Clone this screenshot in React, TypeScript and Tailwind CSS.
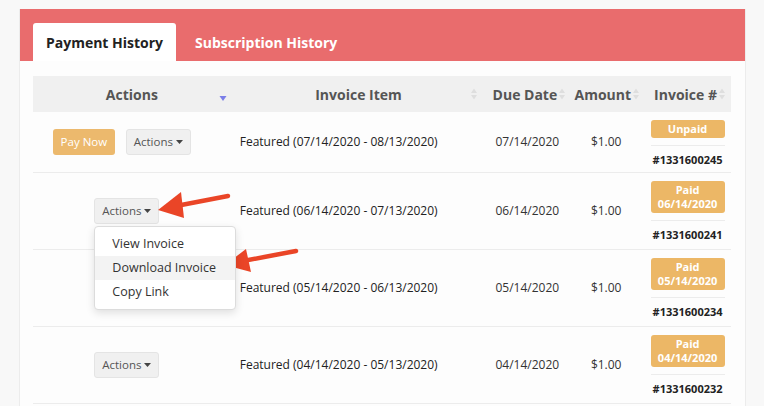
import React from "react";

const FONT = { fontFamily: '"Open Sans", "Noto Sans", Arial, sans-serif' };

type Row = {
  period: string;
  due: string;
  payNow?: boolean;
  paidOn?: string;
  invoice: string;
  menuOpen?: boolean;
};

const ROWS: Row[] = [
  { period: "07/14/2020 - 08/13/2020", due: "07/14/2020", payNow: true, invoice: "#1331600245" },
  { period: "06/14/2020 - 07/13/2020", due: "06/14/2020", paidOn: "06/14/2020", invoice: "#1331600241", menuOpen: true },
  { period: "05/14/2020 - 06/13/2020", due: "05/14/2020", paidOn: "05/14/2020", invoice: "#1331600234" },
  { period: "04/14/2020 - 05/13/2020", due: "04/14/2020", paidOn: "04/14/2020", invoice: "#1331600232" },
];

function SortIcon({ active }: { active?: boolean }) {
  if (active) {
    return (
      <svg width="8" height="10" viewBox="0 0 8 10" className="shrink-0">
        <path d="M0.5 3 L7.5 3 L4 8 Z" fill="#7b7ee8" />
      </svg>
    );
  }
  return (
    <svg width="8" height="14" viewBox="0 0 8 14" className="shrink-0">
      <path d="M1 6 L7 6 L4 1.5 Z" fill="#dedede" />
      <path d="M1 8 L7 8 L4 12.5 Z" fill="#dedede" />
    </svg>
  );
}

function Caret() {
  return (
    <svg width="7" height="4" viewBox="0 0 7 4" className="ml-[3px]">
      <path d="M0 0 L7 0 L3.5 4 Z" fill="#444" />
    </svg>
  );
}

function ActionsButton() {
  return (
    <button className="h-[26px] w-[65px] flex items-center justify-center rounded-[3px] border border-[#e4e4e4] bg-[#f0f0f0] text-[11.5px] text-[#555]">
      Actions
      <Caret />
    </button>
  );
}

function Dropdown() {
  return (
    <div className="absolute left-0 top-[28px] z-10 w-[142px] rounded-[4px] border border-[#dcdcdc] bg-white py-[5px] shadow-[0_3px_8px_rgba(0,0,0,0.12)]">
      <div className="h-[24px] flex items-center px-[17px] text-[12.5px] text-[#333] whitespace-nowrap">View Invoice</div>
      <div className="h-[24px] flex items-center px-[17px] text-[12.5px] text-[#333] whitespace-nowrap bg-[#f3f3f3]">Download Invoice</div>
      <div className="h-[24px] flex items-center px-[17px] text-[12.5px] text-[#333] whitespace-nowrap">Copy Link</div>
    </div>
  );
}

export default function App() {
  return (
    <div style={FONT} className="relative w-[764px] h-[406px] overflow-hidden bg-[#f8f8f8]">
      <div className="ml-[19px] mt-[9px] w-[727px] h-[420px] bg-[#fdfdfd] border-x border-[#ececec]">
        {/* tabs */}
        <div className="h-[52px] bg-[#e96c6d] flex items-end pl-[13px]">
          <div className="h-[38px] w-[143px] bg-white rounded-t-[3px] flex items-center justify-center text-[14px] font-bold text-[#222]">
            Payment History
          </div>
          <div className="h-[38px] flex items-center ml-[19px] text-[14px] font-bold text-white">
            Subscription History
          </div>
        </div>

        {/* table */}
        <div className="pl-[13px] pr-[14px] pt-[15px]">
          <div className="flex h-[36px] bg-[#f0f0f0] text-[14px] font-bold text-[#555]">
            <div className="w-[200px] relative flex items-center justify-center pr-[2px]">
              Actions
              <span className="absolute right-[6px] top-[17px]">
                <SortIcon active />
              </span>
            </div>
            <div className="w-[252px] relative flex items-center justify-center">
              Invoice Item
              <span className="absolute right-[6px] top-[11px]">
                <SortIcon />
              </span>
            </div>
            <div className="w-[86px] flex items-center justify-end pr-[4px] gap-[1px]">
              Due Date
              <SortIcon />
            </div>
            <div className="w-[76px] flex items-center justify-end pr-[6px] gap-[1px]">
              Amount
              <SortIcon />
            </div>
            <div className="w-[85px] flex items-center justify-end pr-[5px] gap-[1px]">
              Invoice #
              <SortIcon />
            </div>
          </div>

          {ROWS.map((r, i) => (
            <div
              key={r.invoice}
              className={`flex border-b border-[#ececec] ${i === 0 ? "h-[61px]" : "h-[77px]"}`}
            >
              <div
                className={`w-[200px] flex items-center justify-center ${r.payNow ? "pr-[22px]" : "pr-[12px]"}`}
              >
                {r.payNow ? (
                  <div className="flex gap-[11px]">
                    <button className="h-[26px] w-[62px] rounded-[3px] bg-[#ecb96d] text-[11.5px] text-white">
                      Pay Now
                    </button>
                    <ActionsButton />
                  </div>
                ) : (
                  <div className="relative">
                    <ActionsButton />
                    {r.menuOpen && <Dropdown />}
                  </div>
                )}
              </div>
              <div className="w-[252px] flex items-center pl-[7px] text-[12px] text-[#222] whitespace-nowrap">
                Featured ({r.period})
              </div>
              <div className="w-[86px] flex items-center justify-center text-[12px] text-[#333]">
                {r.due}
              </div>
              <div className="w-[76px] flex items-center justify-center pr-[4px] text-[12px] text-[#333]">
                $1.00
              </div>
              <div className="w-[85px] flex flex-col items-center pt-[8px] pr-[2px]">
                <div className="w-[74px] rounded-[3px] bg-[#ecb766] text-white text-[11px] font-bold text-center leading-[14px] py-[2px]">
                  {r.paidOn ? (
                    <>
                      Paid
                      <br />
                      {r.paidOn}
                    </>
                  ) : (
                    "Unpaid"
                  )}
                </div>
                <div className="w-[74px] mt-[7px] border-t border-[#ececec] pt-[6px] text-center text-[11px] font-bold text-[#222]">
                  {r.invoice}
                </div>
              </div>
            </div>
          ))}
        </div>
      </div>

      {/* annotation arrows */}
      <svg className="absolute left-0 top-0 pointer-events-none" width="764" height="406" viewBox="0 0 764 406">
        <line x1="228" y1="196" x2="176" y2="206" stroke="#ea4527" strokeWidth="4.5" strokeLinecap="round" />
        <path d="M158 210 L181 192 L184 218 Z" fill="#ea4527" />
        <line x1="296" y1="251" x2="243" y2="261" stroke="#ea4527" strokeWidth="4.5" strokeLinecap="round" />
        <path d="M225 265 L246 249 L251 272 Z" fill="#ea4527" />
      </svg>
    </div>
  );
}
